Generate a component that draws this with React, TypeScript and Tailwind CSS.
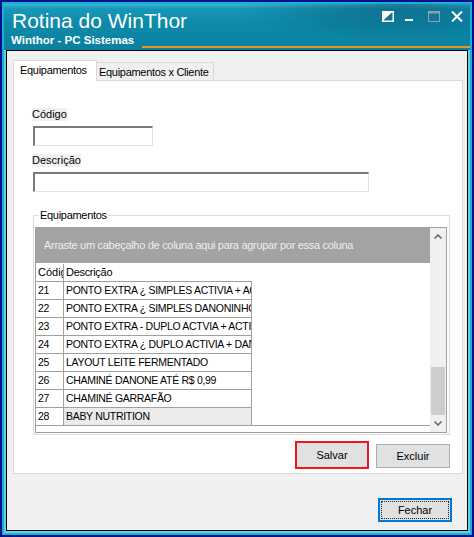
const rows = [
  { cod: '21', desc: 'PONTO EXTRA ¿ SIMPLES ACTIVIA + ACTIVIA' },
  { cod: '22', desc: 'PONTO EXTRA ¿ SIMPLES DANONINHO' },
  { cod: '23', desc: 'PONTO EXTRA - DUPLO ACTVIA + ACTIVIA' },
  { cod: '24', desc: 'PONTO EXTRA ¿ DUPLO ACTIVIA + DANONE' },
  { cod: '25', desc: 'LAYOUT LEITE FERMENTADO' },
  { cod: '26', desc: 'CHAMINÉ DANONE ATÉ R$ 0,99' },
  { cod: '27', desc: 'CHAMINÉ GARRAFÃO' },
  { cod: '28', desc: 'BABY NUTRITION' },
]

function TitleIcons() {
  return (
    <div className="flex gap-[11px] mt-[2px]">
      {/* restore */}
      <svg width="12" height="11" viewBox="0 0 12 11">
        <rect x="0.75" y="0.75" width="10.5" height="9.5" fill="none" stroke="#fff" strokeWidth="1.5" />
        <polygon points="0,0 11.5,0 0,10.5" fill="#fff" />
      </svg>
      {/* minimize */}
      <svg width="12" height="11" viewBox="0 0 12 11">
        <rect x="0" y="8" width="8" height="2" fill="#fff" />
      </svg>
      {/* maximize */}
      <svg width="12" height="11" viewBox="0 0 12 11">
        <rect x="0.5" y="0.5" width="11" height="10" fill="none" stroke="#8fa2aa" strokeWidth="1" />
        <rect x="0" y="0" width="12" height="2.5" fill="#8fa2aa" />
      </svg>
      {/* close */}
      <svg width="12" height="11" viewBox="0 0 12 11">
        <path d="M1 0.5 L11 10.5 M11 0.5 L1 10.5" stroke="#fff" strokeWidth="2" />
      </svg>
    </div>
  )
}

function Chevron({ down }: { down?: boolean }) {
  return (
    <svg width="8" height="5" viewBox="0 0 8 5">
      <polyline
        points={down ? '0.5,0.5 4,4 7.5,0.5' : '0.5,4.5 4,1 7.5,4.5'}
        fill="none"
        stroke="#606060"
        strokeWidth="1.5"
      />
    </svg>
  )
}

export default function App() {
  return (
    <div className="w-[474px] h-[537px] bg-[#06108f] p-[2px] font-['Liberation_Sans',Arial,sans-serif] text-black">
      <div className="h-full flex flex-col border-2 border-[#19b1cd] bg-[radial-gradient(ellipse_230px_50px_at_400px_0px,rgba(3,55,90,0.45),transparent_75%),linear-gradient(180deg,#38b8d4_0px,#1797b6_5px,#0e8aa9_20px,#0b809f_46px)]">
        {/* title bar */}
        <div className="h-[46px] pt-[5px] flex flex-col">
          <div className="flex justify-between items-start pl-[8px] pr-[7px]">
            <span className="text-white text-[21px] leading-[24px]">Rotina do WinThor</span>
            <TitleIcons />
          </div>
          <div className="flex items-start pl-[7px]">
            <span className="text-white font-bold text-[11.5px] leading-[14px]">Winthor - PC Sistemas</span>
            <div className="flex-1 ml-[8px] mt-[13px] h-[2px] bg-[#e6961e]" />
          </div>
        </div>

        <div className="flex-1 flex flex-col border-x-2 border-b-2 border-[#66cfe1]">
          <div className="flex-1 flex flex-col border border-black bg-[#f0f0f0] pt-[9px] pl-[6px] pr-[4px] text-[11px] tracking-[-0.3px]">
            {/* tabs */}
            <div className="h-[20px] flex items-end">
              <div className="self-start relative z-10 w-[84px] h-[21px] bg-white border border-b-0 border-[#d9d9d9] pl-[6px] pt-[3px] leading-[13px]">
                Equipamentos
              </div>
              <div className="w-[117px] h-[18px] bg-[#f0f0f0] border border-l-0 border-b-0 border-[#d9d9d9] pl-[2px] pt-[3px] leading-[13px]">
                Equipamentos x Cliente
              </div>
            </div>

            <div className="w-[450px] h-[394px] bg-white border border-[#d9d9d9] pl-[19px] flex flex-col">
              <span className="mt-[27px] -ml-px w-fit h-[13px] leading-[13px] bg-[#f0f0f0] tracking-normal">Código</span>
              <div className="mt-[5px] w-[120px] h-[20px] bg-white border border-[#e3e3e3] border-t-2 border-l-2 border-t-[#7a7a7a] border-l-[#7a7a7a]" />
              <span className="mt-[8px] -ml-px w-fit h-[13px] leading-[13px] bg-[#f0f0f0] tracking-normal">Descrição</span>
              <div className="mt-[5px] w-[336px] h-[20px] bg-white border border-[#e3e3e3] border-t-2 border-l-2 border-t-[#7a7a7a] border-l-[#7a7a7a]" />

              {/* group box */}
              <div className="relative mt-[23px] w-[417px] h-[220px] border border-[#dcdcdc] pt-[11px] pl-px">
                <span className="absolute left-[5px] top-[-7px] px-[1px] bg-white leading-[13px]">Equipamentos</span>

                <div className="w-[412px] h-[206px] border border-[#a0a0a0] flex">
                  <div className="w-[394px] flex flex-col">
                    <div className="h-[35px] bg-[#a3a3a3] text-[#ededed] pl-[8px] flex items-center">
                      Arraste um cabeçalho de coluna aqui para agrupar por essa coluna
                    </div>
                    <div className="h-[18px] flex w-[216px] leading-[17px] pt-px">
                      <div className="w-[28px] shrink-0 border-r border-[#a0a0a0] pl-[2px] overflow-hidden whitespace-nowrap tracking-normal">
                        Código
                      </div>
                      <div className="flex-1 pl-[2px]">Descrição</div>
                    </div>
                    {rows.map((r) => (
                      <div
                        key={r.cod}
                        className="h-[18px] w-[216px] flex border-t border-r border-[#a0a0a0] text-[10.5px] leading-[17px]"
                      >
                        <div className="w-[28px] shrink-0 border-r border-[#a0a0a0] pl-[2px]">{r.cod}</div>
                        <div
                          className={
                            'flex-1 pl-[2px] overflow-hidden whitespace-nowrap ' +
                            (r.cod === '28' ? 'bg-[#ebebeb]' : '')
                          }
                        >
                          {r.desc}
                        </div>
                      </div>
                    ))}
                    <div className="h-px bg-[#a0a0a0]" />
                  </div>

                  {/* vertical scrollbar */}
                  <div className="w-[16px] bg-[#f0f0f0] flex flex-col">
                    <div className="h-[17px] flex items-center justify-center">
                      <Chevron />
                    </div>
                    <div className="flex-1 flex flex-col justify-end px-px">
                      <div className="h-[48px] bg-[#cdcdcd]" />
                    </div>
                    <div className="h-[17px] flex items-center justify-center">
                      <Chevron down />
                    </div>
                  </div>
                </div>
              </div>

              <div className="mt-[6px] w-[417px] flex justify-end items-start gap-[7px]">
                <div className="w-[74px] h-[28px] border-2 border-[#f0161c] bg-[#e1e1e1] flex items-center justify-center tracking-normal">
                  Salvar
                </div>
                <div className="mt-[3px] w-[74px] h-[24px] border border-[#adadad] bg-[#e1e1e1] flex items-center justify-center tracking-normal">
                  Excluir
                </div>
              </div>
            </div>

            <div className="mt-[24px] flex justify-end mr-[11px]">
              <div className="w-[74px] h-[24px] border-2 border-[#0078d7] bg-[#e1e1e1] p-px">
                <div className="h-full border border-dotted border-[#222] flex items-center justify-center tracking-normal">
                  Fechar
                </div>
              </div>
            </div>
          </div>
        </div>
      </div>
    </div>
  )
}
